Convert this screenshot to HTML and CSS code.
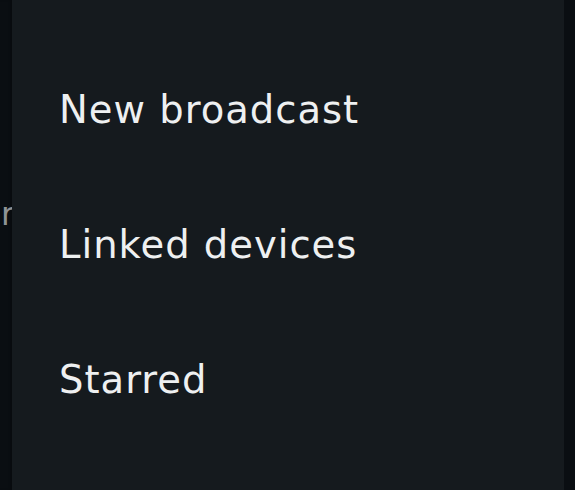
FILE: index.html
```html
<!DOCTYPE html>
<html lang="en">
<head>
    <meta charset="UTF-8">
    <meta name="viewport" content="width=device-width, initial-scale=1.0">
    <title>Menu</title>
    <link rel="stylesheet" href="styles.css">
</head>
<body>
    <div class="screen">
        <div class="behind-left"><span>r</span></div>
        <ul class="menu">
            <li class="menu-item">New broadcast</li>
            <li class="menu-item">Linked devices</li>
            <li class="menu-item">Starred</li>
        </ul>
        <div class="behind-right"></div>
    </div>
</body>
</html>
```

FILE: styles.css
```css
:root {
    --bg: #0a0e12;
    --panel: #151a1e;
    --text: #eef0f1;
    --muted: #8f9396;
    font-family: "DejaVu Sans", "Noto Sans", sans-serif;
}

body {
    margin: 0;
    background-color: var(--bg);
}

.screen {
    display: grid;
    grid-template-columns: 12px 1fr 11px;
    height: 490px;
    overflow: hidden;
}

.behind-left {
    background-color: var(--bg);
    overflow: hidden;
    padding-top: 189px;
    padding-left: 1px;
    box-shadow: inset -2px 0 2px rgba(0, 0, 0, 0.2);
}
.behind-left span {
    display: block;
    color: var(--muted);
    font-size: 32px;
    line-height: 50px;
    letter-spacing: -2px;
}

.menu {
    list-style: none;
    margin: 0;
    padding: 42px 0 0 47px;
    background-color: var(--panel);
}
.menu-item {
    color: var(--text);
    font-size: 38.5px;
    letter-spacing: 1px;
    line-height: 135px;
    height: 135px;
}

.behind-right {
    background-color: var(--bg);
}
```
